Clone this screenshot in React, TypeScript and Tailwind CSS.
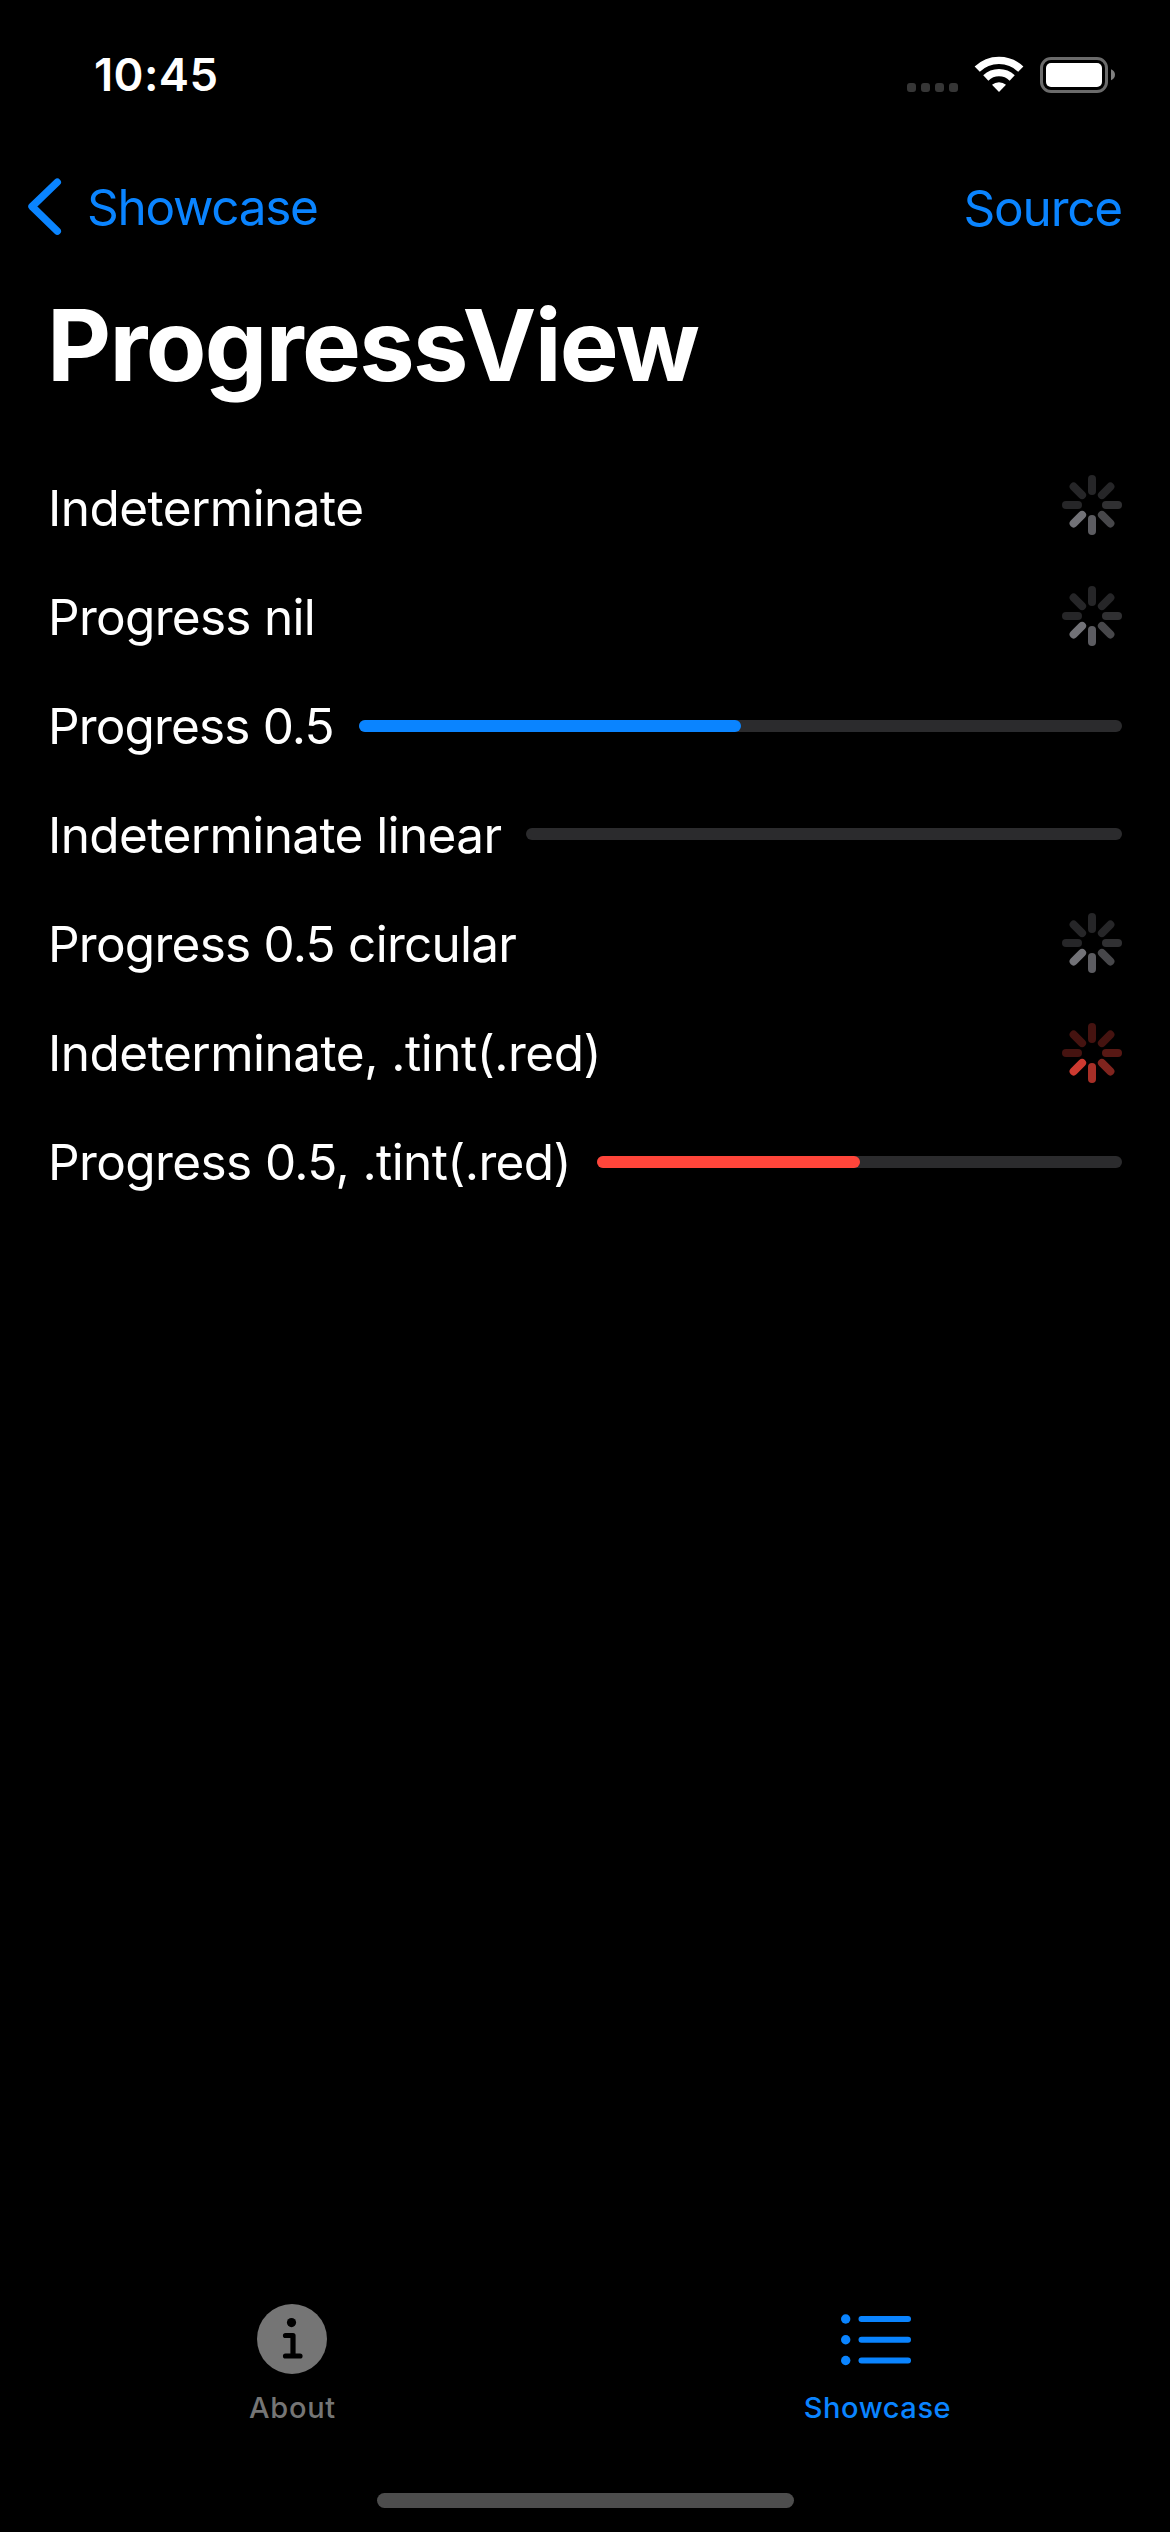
import React from "react";

const SPOKES = ["#262628", "#262628", "#303032", "#47474a", "#5c5c61", "#727277", "#262628", "#262628"];
const RED_SPOKES = ["#451310", "#451310", "#581814", "#80241e", "#a72f27", "#cd3a30", "#451310", "#451310"];

function Spinner({ colors = SPOKES, className = "" }: { colors?: string[]; className?: string }) {
  return (
    <svg viewBox="-30 -30 60 60" className={`ml-auto h-[60px] w-[60px] shrink-0 ${className}`}>
      {colors.map((c, i) => (
        <rect key={i} x="-4" y="-30" width="8" height="20" rx="4" fill={c} transform={`rotate(${i * 45})`} />
      ))}
    </svg>
  );
}

function Bar({ value = 0, className = "" }: { value?: number; className?: string }) {
  return (
    <div className={`ml-auto h-3 shrink-0 overflow-hidden rounded-[6px] bg-[#2b2b2d] ${className}`}>
      <div className="h-full rounded-r-[6px] bg-current" style={{ width: `${value * 100}%` }} />
    </div>
  );
}

function Row({ label, tracking, children }: { label: string; tracking: string; children: React.ReactNode }) {
  return (
    <div className="flex h-[109px] items-center">
      <span className={`whitespace-nowrap text-[49.5px] leading-[60px] text-white ${tracking}`}>{label}</span>
      {children}
    </div>
  );
}

export default function App() {
  return (
    <div className="flex h-[2532px] w-[1170px] flex-col overflow-hidden bg-black font-['Inter',sans-serif] text-white">
      <header className="flex h-[149px] shrink-0 items-center justify-between pr-[55px] pl-[94px]">
        <span className="text-[45.4px] leading-[56px] font-semibold tracking-[0.4px]">10:45</span>
        <div className="flex h-[38px] w-[208px]">
          <svg viewBox="907 55 208 38" className="h-full w-full">
            {[907, 921, 935, 949].map((x) => (
              <rect key={x} x={x} y="82" width="9" height="9" rx="3" fill="#363636" />
            ))}
            <g fill="none" stroke="#fff" strokeWidth="7.4">
              <path d="M977.2 68.2a31.3 31.3 0 0 1 43.6 0" />
              <path d="M985.8 77a19 19 0 0 1 26.4 0" />
            </g>
            <path d="M999 91l-7-7.2a10.5 10.5 0 0 1 14 0z" fill="#fff" />
            <rect x="1041.5" y="57.5" width="65" height="33" rx="9.5" fill="none" stroke="#6b6b6b" strokeWidth="3" />
            <rect x="1046" y="62" width="56" height="24" rx="5" fill="#fff" />
            <path d="M1111 68.3c2.6 1 4 3 4 5.500s-1.400 4.500-4 5.500z" fill="#808080" />
          </svg>
        </div>
      </header>

      <nav className="flex h-[116px] shrink-0 items-center justify-between pr-[48px] pl-[27px] text-[49.5px] leading-[60px] text-[#0a84ff]">
        <div className="flex items-center">
          <svg viewBox="0 0 36 60" className="h-[60px] w-9" fill="none" stroke="currentColor" strokeWidth="7.4" strokeLinecap="round" strokeLinejoin="round">
            <path d="M30.3 5.2L5 29.5L30.3 54.2" />
          </svg>
          <span className="ml-6 tracking-[-1.3px]">Showcase</span>
        </div>
        <span className="mt-[2px] tracking-[-1.2px]">Source</span>
      </nav>

      <h1 className="h-[160px] shrink-0 pl-[47px] text-[99px] leading-[160px] font-bold tracking-[-1.65px]">ProgressView</h1>

      <main className="mt-7 flex flex-col px-12">
        <Row label="Indeterminate" tracking="tracking-[-0.55px]"><Spinner className="-translate-y-[3px]" /></Row>
        <Row label="Progress nil" tracking="tracking-[-0.7px]"><Spinner className="-translate-y-px" /></Row>
        <Row label="Progress 0.5" tracking="tracking-[-0.85px]"><Bar value={0.5} className="w-[763px] text-[#0a84ff]" /></Row>
        <Row label="Indeterminate linear" tracking="tracking-[-0.6px]"><Bar className="w-[596px] -translate-y-px" /></Row>
        <Row label="Progress 0.5 circular" tracking="tracking-[-0.75px]"><Spinner className="-translate-y-px" /></Row>
        <Row label="Indeterminate, .tint(.red)" tracking="tracking-[-0.5px]"><Spinner colors={RED_SPOKES} /></Row>
        <Row label="Progress 0.5, .tint(.red)" tracking="tracking-[-0.6px]"><Bar value={0.5} className="w-[525px] text-[#ff453a]" /></Row>
      </main>

      <footer className="mt-auto flex h-[240px] shrink-0 flex-col">
        <div className="grid grid-cols-2 text-[29px] leading-[36px] font-medium">
          <div className="flex flex-col items-center text-[#757575]">
            <svg viewBox="0 0 70 70" className="mt-3 mr-[2px] h-[70px] w-[70px]">
              <circle cx="35" cy="35" r="35" fill="currentColor" />
              <circle cx="34.5" cy="18.6" r="4.6" fill="#000" />
              <path d="M28.500 31.500h7.500v20.500M28.500 52h14.500" fill="none" stroke="#000" strokeWidth="5.2" strokeLinecap="round" strokeLinejoin="round" />
            </svg>
            <span className="mt-4 tracking-[0.7px]">About</span>
          </div>
          <div className="flex flex-col items-center text-[#0a84ff]">
            <svg viewBox="0 0 70 70" className="mt-3 mr-[3px] h-[70px] w-[70px]" fill="currentColor">
              {[15, 35.7, 56.5].map((y) => (
                <g key={y}>
                  <circle cx="4.7" cy={y} r="4.7" />
                  <rect x="17.5" y={y - 3} width="52.5" height="6" rx="3" />
                </g>
              ))}
            </svg>
            <span className="mt-4 tracking-[0.55px]">Showcase</span>
          </div>
        </div>
        <div className="mx-auto mt-auto mb-6 h-[15px] w-[417px] rounded-full bg-[#4d4d4d]" />
      </footer>
    </div>
  );
}
